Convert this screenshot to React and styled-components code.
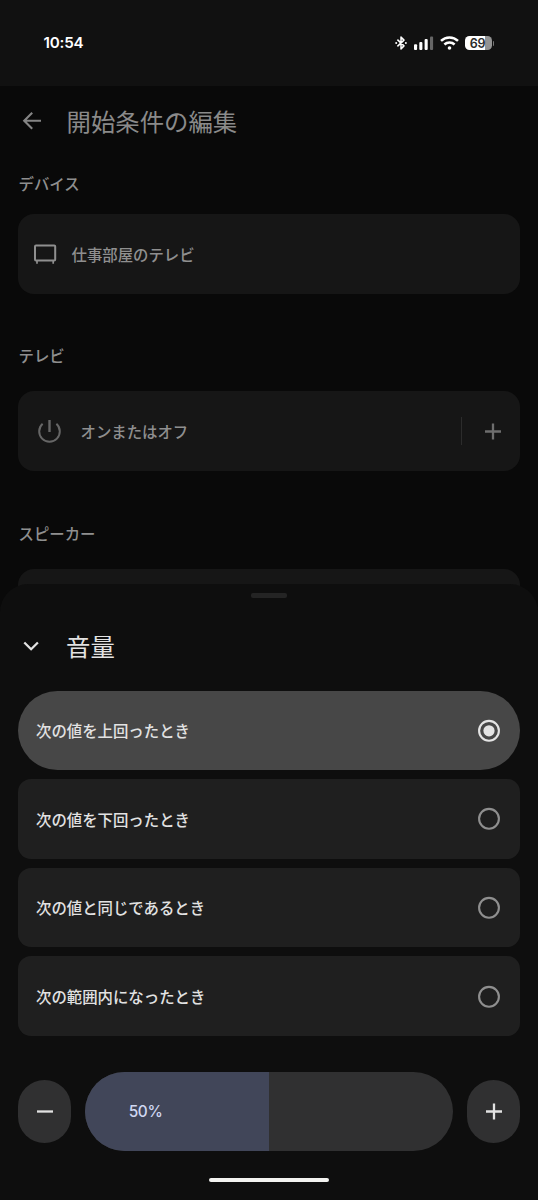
import { useState } from "react";
import styled, { createGlobalStyle } from "styled-components";

const GlobalStyle = createGlobalStyle`
  * {
    box-sizing: border-box;
  }
  body {
    margin: 0;
    background: #090909;
    font-family: "Noto Sans CJK JP", sans-serif;
  }
  button {
    border: 0;
    padding: 0;
    font: inherit;
    color: inherit;
  }
  svg {
    display: block;
    flex: none;
  }
`;

const Screen = styled.div`
  position: relative;
  width: 538px;
  height: 1200px;
  overflow: hidden;
  background: #090909;
`;

const StatusBar = styled.div`
  display: flex;
  justify-content: space-between;
  height: 86px;
  padding: 33px 44px 0 43.5px;
  background: #111;
  color: #fff;
`;

const Time = styled.div`
  font: 600 15.2px/20px Inter, sans-serif;
  letter-spacing: -0.2px;
`;

const StatusIcons = styled.div`
  display: flex;
  align-items: center;
  height: 20px;
`;

const Page = styled.main`
  padding: 0 18.5px 0 18px;
  color: #8f8f8f;
`;

const PageHeader = styled.header`
  display: flex;
  align-items: center;
  height: 70px;
  gap: 24px;
  padding-left: 0.5px;
`;

const Title = styled.h1`
  margin: 0;
  padding-bottom: ${(props) => props.$lift || "0"};
  font-size: 24.4px;
  font-weight: 400;
  line-height: 36px;
  color: ${(props) => props.$color};
`;

const Section = styled.section`
  height: 177.4px;
`;

const SectionTitle = styled.h2`
  margin: 0;
  padding: ${(props) => props.$top || "11px"} 0 0 0.5px;
  height: 58px;
  font-size: 15.4px;
  font-weight: 500;
  line-height: 22px;
  color: #8f8f8f;
`;

const Card = styled.div`
  display: flex;
  align-items: center;
  height: 79.6px;
  padding: ${(props) => props.$padding || "0 15px"};
  gap: ${(props) => props.$gap || "14.5px"};
  border-radius: 16px;
  background: #161616;
  font-size: 15.4px;
  font-weight: 500;
`;

const CardLabel = styled.span`
  flex: 1;
`;

const Divider = styled.div`
  width: 1px;
  height: 28px;
  margin-right: 3.5px;
  background: #2c2c2c;
`;

const Sheet = styled.div`
  position: absolute;
  left: 0;
  right: 0;
  bottom: 0;
  height: 616px;
  display: flex;
  flex-direction: column;
  padding: 9px 18px 0;
  border-radius: 28px 28px 0 0;
  background: #0e0e0e;
  color: #e2e2e2;
`;

const Handle = styled.div`
  align-self: center;
  width: 36px;
  height: 4.5px;
  border-radius: 2px;
  background: #242424;
`;

const SheetHeader = styled.div`
  display: flex;
  align-items: center;
  gap: 23px;
  height: 36px;
  margin: 30.5px 0 26.5px;
  padding-left: 1px;
`;

const Options = styled.div`
  display: flex;
  flex-direction: column;
  gap: 9px;
`;

const Option = styled.button`
  display: flex;
  align-items: center;
  justify-content: space-between;
  height: 79.6px;
  padding: 0 20px 0 18px;
  border-radius: ${(props) => (props.$selected ? "40px" : "13px")};
  background: ${(props) => (props.$selected ? "#474747" : "#1f1f1f")};
  font-size: 15.4px;
  font-weight: 500;
  color: #e2e2e2;
`;

function Radio({ checked }) {
  return (
    <svg width="22" height="23" viewBox="0 0 22 23" fill="none">
      <circle cx="11" cy="11.8" r="9.9" stroke={checked ? "#e4e4e4" : "#8f8f8f"} strokeWidth="2.1" />
      {checked && <circle cx="11" cy="11.8" r="5.6" fill="#e4e4e4" />}
    </svg>
  );
}

const VolumeRow = styled.div`
  display: flex;
  align-items: center;
  justify-content: space-between;
  margin-top: 36px;
`;

const StepButton = styled.button`
  display: flex;
  align-items: center;
  justify-content: center;
  width: 53px;
  height: 62.5px;
  border-radius: 27px;
  background: #303031;
`;

const Slider = styled.div`
  width: 368.5px;
  height: 79.5px;
  border-radius: 40px;
  overflow: hidden;
  background: #303031;
`;

const SliderFill = styled.div`
  display: flex;
  align-items: center;
  height: 100%;
  padding: 1.5px 0 0 44px;
  background: #414659;
  color: #d0d8f2;
  font: 500 15.4px/20px Inter, sans-serif;
  letter-spacing: -0.4px;
`;

const HomeBar = styled.div`
  align-self: center;
  width: 120px;
  height: 4px;
  margin-top: 26.6px;
  border-radius: 2px;
  background: #f3f3f0;
`;

const options = [
  "次の値を上回ったとき",
  "次の値を下回ったとき",
  "次の値と同じであるとき",
  "次の範囲内になったとき",
];

function BluetoothIcon() {
  return (
    <svg width="12" height="14" viewBox="0 0 12 14" fill="none" stroke="#fff" strokeWidth="1.5" strokeLinejoin="round">
      <path d="M2.4 3.6 9 9.9 6 12.9V1.1l3 3-6.6 6.3" />
      <circle cx="1.2" cy="7" r="1" fill="#fff" stroke="none" />
      <circle cx="10.9" cy="7" r="1" fill="#fff" stroke="none" />
    </svg>
  );
}

function SignalIcon() {
  return (
    <svg width="20" height="14" viewBox="0 0 20 14" fill="#fff">
      <rect x="0" y="8.3" width="3.1" height="5.7" rx="1" />
      <rect x="5.3" y="6" width="3.1" height="8" rx="1" />
      <rect x="10.6" y="3" width="3.1" height="11" rx="1" />
      <rect x="16" y="0.5" width="3.1" height="13.5" rx="1" fill="#666" />
    </svg>
  );
}

function WifiIcon() {
  return (
    <svg width="19" height="14" viewBox="0 0 19 14" fill="none" stroke="#fff" strokeWidth="2.5">
      <path d="M1 4.9a12.2 12.2 0 0 1 17 0" />
      <path d="M4.4 8.5a7.3 7.3 0 0 1 10.2 0" />
      <circle cx="9.5" cy="12" r="1.8" fill="#fff" stroke="none" />
    </svg>
  );
}

const Battery = styled.div`
  width: 27px;
  height: 14.5px;
  padding-right: 1px;
  border-radius: 4.5px;
  background: linear-gradient(90deg, #fff 73%, #939393 73%);
  color: #2b2b2b;
  font: 600 12.5px/15px Inter, sans-serif;
  letter-spacing: -0.3px;
  text-align: center;
`;

const BatteryTip = styled.div`
  width: 1.5px;
  height: 5px;
  margin-left: 1px;
  border-radius: 0 2px 2px 0;
  background: #777;
`;

const StatusGap = styled.div`
  width: ${(props) => props.$width}px;
`;

function BackIcon() {
  return (
    <svg width="24" height="24" viewBox="0 0 24 24" fill="none" stroke="#858585" strokeWidth="2.1">
      <path d="M22 11.8H5.2M13.2 3.8l-8 8 8 8" />
    </svg>
  );
}

function TvIcon() {
  return (
    <svg width="24" height="24" viewBox="0 0 24 24" fill="none" stroke="#8f8f8f" strokeWidth="2">
      <rect x="2" y="3.5" width="20.2" height="15" rx="1" />
      <path d="M4 18.5v3.3M20.2 18.5v3.3" strokeWidth="1.7" />
    </svg>
  );
}

function PowerIcon() {
  return (
    <svg width="24" height="24" viewBox="0 0 24 24" fill="none" stroke="#666" strokeWidth="2">
      <path d="M12.5 1v12" strokeWidth="2.4" />
      <path d="M5.6 4.8a10.3 10.3 0 1 0 13.8 0" />
    </svg>
  );
}

function PlusIcon({ color }) {
  return (
    <svg width="16" height="17" viewBox="0 0 16 17" stroke={color} strokeWidth="2.3">
      <path d="M0 8.5h16M8 .5v16" />
    </svg>
  );
}

function MinusIcon() {
  return (
    <svg width="16" height="17" viewBox="0 0 16 17" stroke="#e2e2e2" strokeWidth="2.3">
      <path d="M0 8.5h16" />
    </svg>
  );
}

function ChevronIcon() {
  return (
    <svg width="24" height="24" viewBox="0 0 24 24" fill="none" stroke="#e2e2e2" strokeWidth="2.3">
      <path d="m5.3 8.5 6.8 6.7 6.8-6.7" />
    </svg>
  );
}

export default function App() {
  const [selected, setSelected] = useState(0);
  const [volume, setVolume] = useState(50);

  return (
    <Screen>
      <GlobalStyle />
      <StatusBar>
        <Time>10:54</Time>
        <StatusIcons>
          <BluetoothIcon />
          <StatusGap $width={7} />
          <SignalIcon />
          <StatusGap $width={6} />
          <WifiIcon />
          <StatusGap $width={6} />
          <Battery>69</Battery>
          <BatteryTip />
        </StatusIcons>
      </StatusBar>

      <Page>
        <PageHeader>
          <BackIcon />
          <Title $color="#8a8a8a" $lift="0.5px">開始条件の編集</Title>
        </PageHeader>
        <Section>
          <SectionTitle $top="15.5px">デバイス</SectionTitle>
          <Card>
            <TvIcon />
            <CardLabel>仕事部屋のテレビ</CardLabel>
          </Card>
        </Section>
        <Section>
          <SectionTitle>テレビ</SectionTitle>
          <Card $padding="0 19px" $gap="19.5px">
            <PowerIcon />
            <CardLabel>オンまたはオフ</CardLabel>
            <Divider />
            <PlusIcon color="#6e6e6e" />
          </Card>
        </Section>
        <Section>
          <SectionTitle>スピーカー</SectionTitle>
          <Card />
        </Section>
      </Page>

      <Sheet>
        <Handle />
        <SheetHeader>
          <ChevronIcon />
          <Title $color="#e2e2e2">音量</Title>
        </SheetHeader>
        <Options>
          {options.map((label, i) => (
            <Option key={label} $selected={i === selected} onClick={() => setSelected(i)}>
              {label}
              <Radio checked={i === selected} />
            </Option>
          ))}
        </Options>
        <VolumeRow>
          <StepButton onClick={() => setVolume(Math.max(0, volume - 1))}>
            <MinusIcon />
          </StepButton>
          <Slider>
            <SliderFill style={{ width: `${volume}%` }}>{volume}%</SliderFill>
          </Slider>
          <StepButton onClick={() => setVolume(Math.min(100, volume + 1))}>
            <PlusIcon color="#e2e2e2" />
          </StepButton>
        </VolumeRow>
        <HomeBar />
      </Sheet>
    </Screen>
  );
}
